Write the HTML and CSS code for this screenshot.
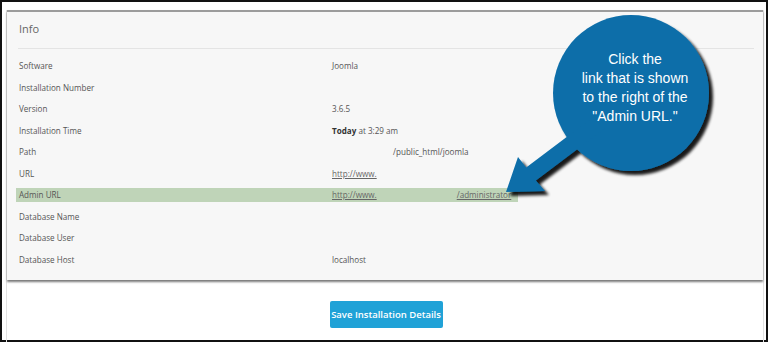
FILE: index.html
```html
<!DOCTYPE html>
<html>
<head>
<meta charset="utf-8">
<link rel="stylesheet" href="styles.css">
</head>
<body>
<div class="frame">
  <div class="inner">
    <section class="panel">
      <h2 class="panel-title">Info</h2>
      <div class="sep"></div>
      <div class="rows">
        <div class="row"><span class="label">Software</span><span class="value">Joomla</span></div>
        <div class="row"><span class="label">Installation Number</span><span class="value"></span></div>
        <div class="row"><span class="label">Version</span><span class="value">3.6.5</span></div>
        <div class="row"><span class="label">Installation Time</span><span class="value"><b>Today</b> at 3:29 am</span></div>
        <div class="row"><span class="label">Path</span><span class="value"><span class="path">/public_html/joomla</span></span></div>
        <div class="row"><span class="label">URL</span><span class="value"><a href="#">http://www.</a></span></div>
        <div class="row hl"><span class="label">Admin URL</span><span class="value"><a href="#">http://www.<span class="gap"></span>/administrator</a></span></div>
        <div class="row"><span class="label">Database Name</span><span class="value"></span></div>
        <div class="row"><span class="label">Database User</span><span class="value"></span></div>
        <div class="row"><span class="label">Database Host</span><span class="value">localhost</span></div>
      </div>
    </section>
    <div class="actions">
      <button class="btn">Save Installation Details</button>
    </div>
  </div>
  <svg class="callout-shape" width="240" height="200" viewBox="480 0 240 200">
    <defs>
      <filter id="sh" x="-20%" y="-20%" width="150%" height="150%">
        <feGaussianBlur in="SourceAlpha" stdDeviation="1.8"/>
        <feOffset dx="3.5" dy="3.5" result="b"/>
        <feComponentTransfer><feFuncA type="linear" slope="0.9"/></feComponentTransfer>
        <feMerge><feMergeNode/><feMergeNode in="SourceGraphic"/></feMerge>
      </filter>
    </defs>
    <g filter="url(#sh)" fill="#0b6ea9">
      <circle cx="631" cy="93" r="78"/>
      <polygon points="604.8,128.4 595.2,115.6 526.2,167.6 518,157 506,192 545,191 535.8,180.4"/>
    </g>
  </svg>
  <div class="callout-text">Click the<br>link that is shown<br>to the right of the<br>"Admin URL."</div>
</div>
</body>
</html>
```

FILE: styles.css
```css
html, body {
  margin: 0;
  padding: 0;
  background: #fff;
}
.frame {
  position: relative;
  width: 768px;
  height: 342px;
  box-sizing: border-box;
  border: 2px solid #111;
  font-family: "Open Sans", "Noto Sans", sans-serif;
}
.inner {
  height: 100%;
  margin: 0 2px 0 4px;
  border-left: 1px solid #e2e2e2;
  border-right: 1px solid #e2e2e2;
  box-sizing: border-box;
}
.panel {
  margin-top: 8px;
  background: #f7f7f7;
  border-top: 2px solid #9c9c9c;
  box-shadow: 0 2px 2px #7a7a7a;
  padding-bottom: 10px;
}
.panel-title {
  margin: 0;
  padding: 0 12px;
  height: 33px;
  line-height: 33px;
  font-size: 11px;
  font-weight: 400;
  color: #666;
}
.sep {
  margin: 3px 9px 0 11px;
  border-top: 1px solid #e4e4e4;
}
.rows {
  padding-top: 6px;
  margin-left: 9px;
}
.row {
  display: flex;
  align-items: center;
  height: 21.5px;
  padding-left: 3px;
  font-size: 8.1px;
  color: #555;
}
.row.hl {
  background: linear-gradient(#bfd4b8, #bfd4b8) no-repeat 0 50% / 502px 14px;
}
.label {
  width: 313px;
  flex: none;
}
.value {
  color: #555;
}
.value b {
  font-weight: 700;
  color: #333;
}
.path {
  padding-left: 61px;
}
.value a {
  color: #666;
  text-decoration: underline;
}
.gap {
  display: inline-block;
  width: 80px;
}
.actions {
  display: flex;
  justify-content: center;
  padding-left: 2px;
  margin-top: 21px;
}
.btn {
  width: 113px;
  height: 27px;
  border: none;
  border-radius: 2px;
  background: #20a2d7;
  color: #fff;
  font-family: "Open Sans", "Noto Sans", sans-serif;
  font-size: 9.5px;
  font-weight: 600;
  padding: 0;
}
.callout-shape {
  position: absolute;
  left: 478px;
  top: -2px;
}
.callout-text {
  position: absolute;
  left: 553px;
  top: 48px;
  width: 160px;
  text-align: center;
  font-family: "Liberation Sans", Arial, sans-serif;
  font-size: 14px;
  line-height: 19px;
  color: #fff;
}
```
